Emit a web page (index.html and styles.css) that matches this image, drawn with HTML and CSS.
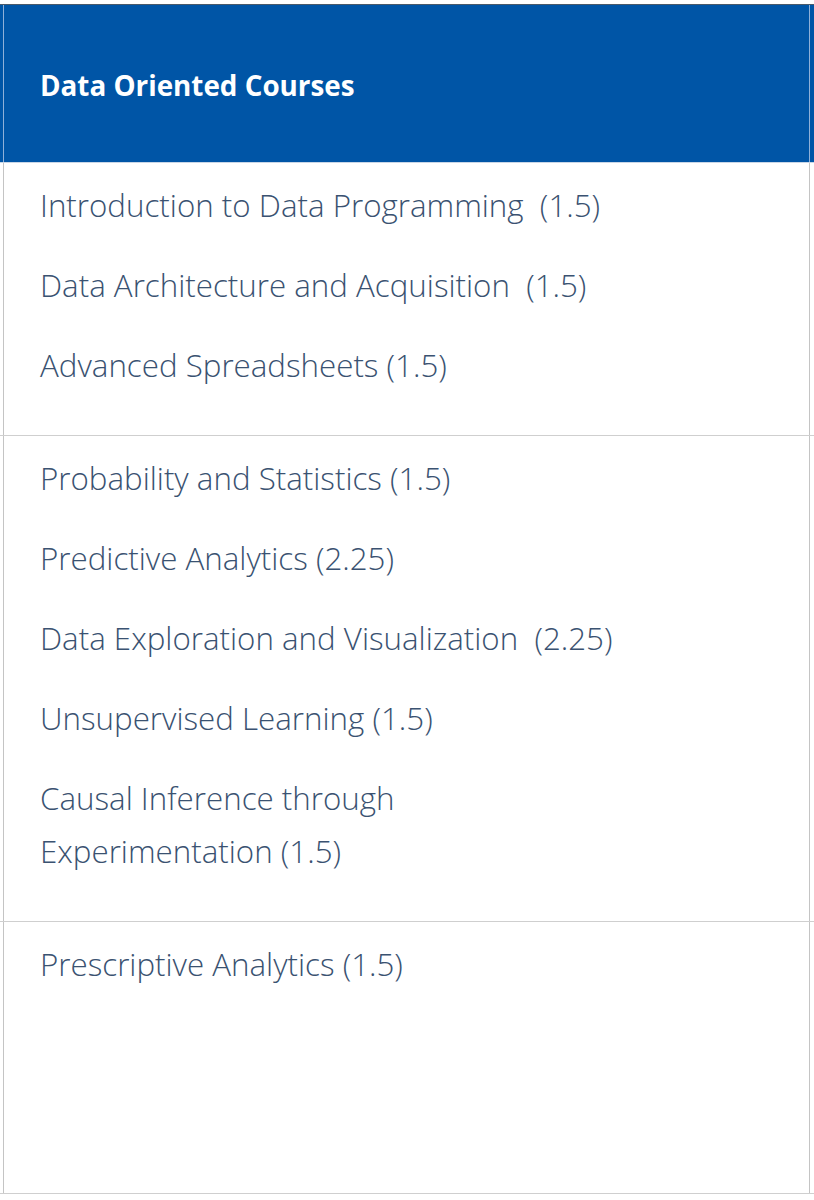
FILE: index.html
```html
<!DOCTYPE html>
<html>
<head>
<meta charset="utf-8">
<link rel="stylesheet" href="styles.css">
</head>
<body>
<div class="table">
  <div class="row head">
    <div class="cell"><h2 class="title">Data Oriented Courses</h2></div>
  </div>
  <div class="row">
    <div class="cell">
      <p class="course">Introduction to Data Programming&nbsp; (1.5)</p>
      <p class="course">Data Architecture and Acquisition&nbsp; (1.5)</p>
      <p class="course">Advanced Spreadsheets (1.5)</p>
    </div>
  </div>
  <div class="row">
    <div class="cell">
      <p class="course">Probability and Statistics (1.5)</p>
      <p class="course">Predictive Analytics (2.25)</p>
      <p class="course">Data Exploration and Visualization&nbsp; (2.25)</p>
      <p class="course">Unsupervised Learning (1.5)</p>
      <p class="course narrow">Causal Inference through Experimentation (1.5)</p>
    </div>
  </div>
  <div class="row last">
    <div class="cell">
      <p class="course">Prescriptive Analytics (1.5)</p>
    </div>
  </div>
</div>
</body>
</html>
```

FILE: styles.css
```css
html, body {
  margin: 0;
  padding: 0;
  background: #fff;
}
body {
  font-family: "Open Sans", "Liberation Sans", sans-serif;
  padding-top: 4px;
}
.table {
  width: 814px;
}
.row {
  padding: 0 4px 0 3px;
  border-bottom: 1px solid #cfcfcf;
}
.cell {
  border-left: 1px solid #c4c4c4;
  border-right: 1px solid #c4c4c4;
  box-sizing: border-box;
  padding: 16px 20px 16px 36px;
}
.row.head {
  background: #0055a6;
  border-top: 1px solid #4a5a6a;
  border-bottom: 1px solid #c9d6e6;
}
.row.head .cell {
  border-left-color: #8fb0d8;
  border-right-color: #8fb0d8;
  height: 157px;
  display: flex;
  align-items: center;
  padding: 2px 20px 0 36px;
}
.title {
  margin: 0;
  color: #fff;
  font-weight: 700;
  font-size: 27.8px;
}
.course {
  margin: 0 0 27px;
  color: #3a5271;
  font-weight: 300;
  font-size: 31.3px;
  line-height: 53px;
}
.narrow {
  max-width: 420px;
}
.row.last .cell {
  height: 271px;
}
```
